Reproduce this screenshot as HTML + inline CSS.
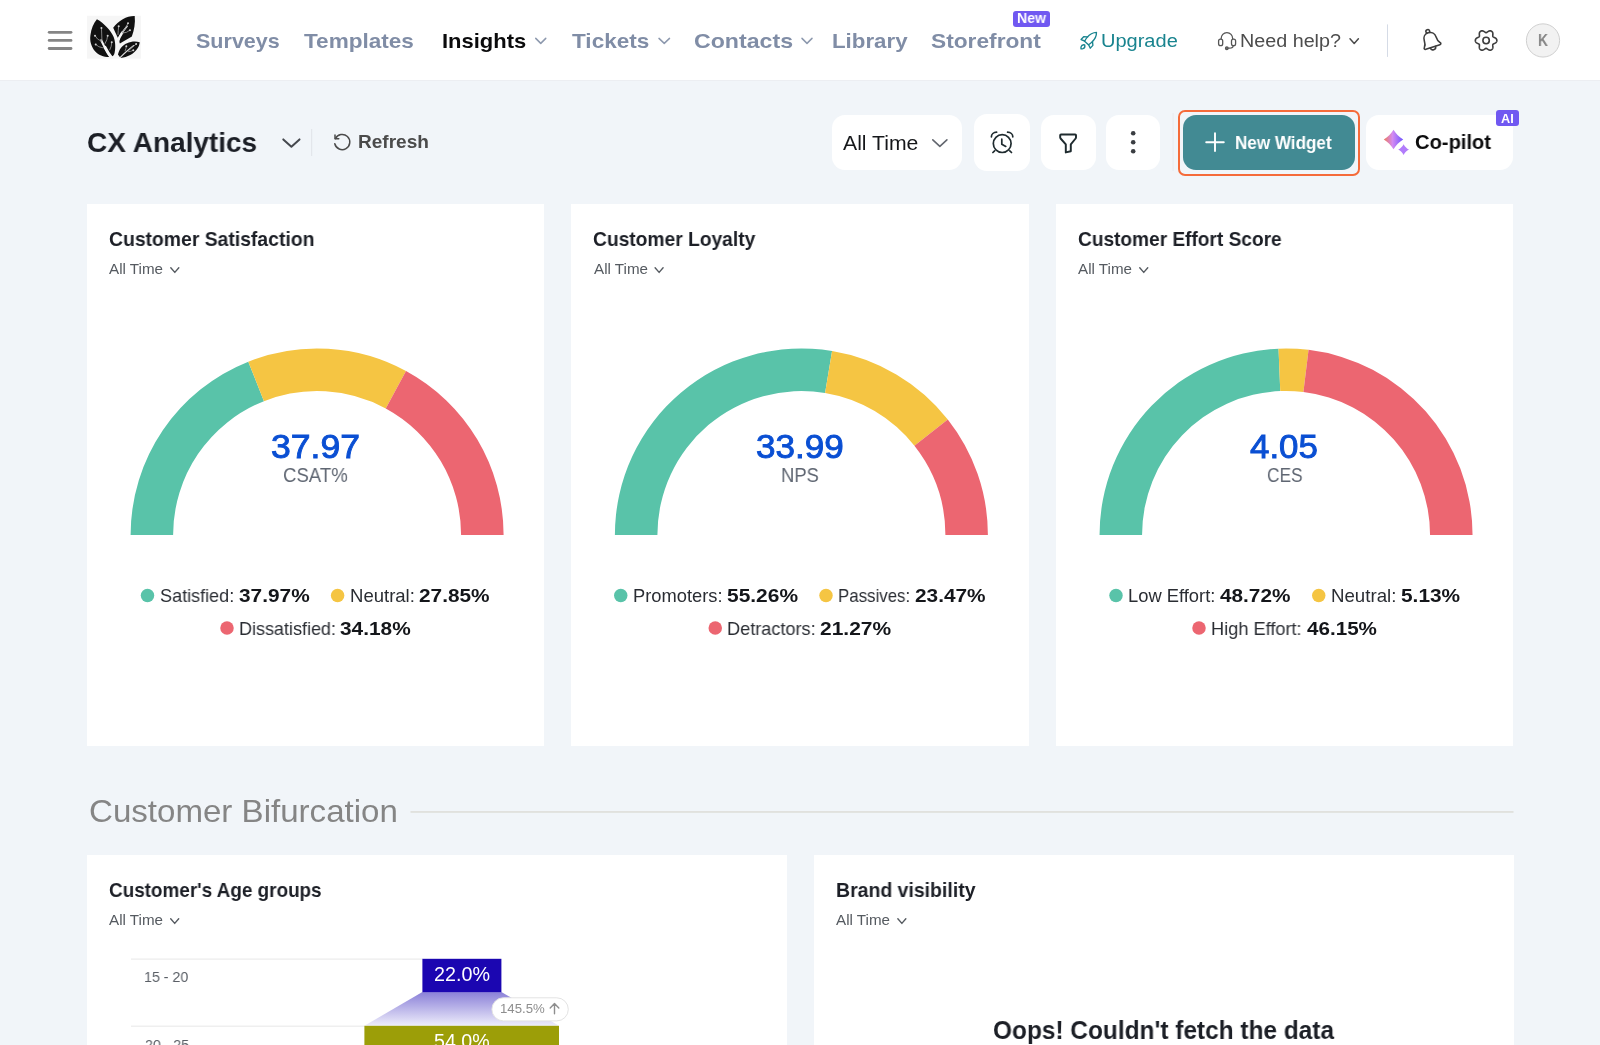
<!DOCTYPE html>
<html><head><meta charset="utf-8"><title>CX Analytics</title>
<style>
html,body{margin:0;padding:0}
body{width:1600px;height:1045px;overflow:hidden;background:#f1f5f9;position:relative;font-family:"Liberation Sans",sans-serif}
.box{position:absolute}
.t{position:absolute;white-space:nowrap;transform-origin:0 0;will-change:transform;font-family:"Liberation Sans",sans-serif}
svg.ov{position:absolute;left:0;top:0;pointer-events:none}
</style></head><body>
<div class="box" style="left:0;top:0;width:1600px;height:80.2px;background:#fff;border-bottom:1px solid #eceef2"></div>
<div class="box" style="left:1012.75px;top:10.6px;width:37.3px;height:16.3px;background:#7058f1;border-radius:3px"></div>
<div class="box" style="left:832px;top:114.8px;width:130px;height:55.39999999999999px;background:#fff;border-radius:13px;"></div>
<div class="box" style="left:973.5px;top:114px;width:56.5px;height:57px;background:#fff;border-radius:13px;"></div>
<div class="box" style="left:1041px;top:115px;width:54.59999999999991px;height:54.599999999999994px;background:#fff;border-radius:13px;"></div>
<div class="box" style="left:1106px;top:115px;width:54.40000000000009px;height:54.599999999999994px;background:#fff;border-radius:13px;"></div>
<div class="box" style="left:1178px;top:109.8px;width:181.5999999999999px;height:66.39999999999999px;background:transparent;border-radius:7px;border:2.4px solid #f56b3a;box-sizing:border-box;"></div>
<div class="box" style="left:1183.3px;top:114.6px;width:171.5px;height:55.400000000000006px;background:#428a93;border-radius:13px;"></div>
<div class="box" style="left:1366px;top:115.2px;width:147.4000000000001px;height:54.60000000000001px;background:#fff;border-radius:13px;"></div>
<div class="box" style="left:1496px;top:110.4px;width:22.59999999999991px;height:15.5px;background:#7058f1;border-radius:3px;"></div>
<div class="box" style="left:86.6px;top:203.6px;width:457.9px;height:542.6999999999999px;background:#fff;border-radius:0px;"></div>
<div class="box" style="left:570.9px;top:203.6px;width:457.9px;height:542.6999999999999px;background:#fff;border-radius:0px;"></div>
<div class="box" style="left:1055.55px;top:203.6px;width:457.89999999999986px;height:542.6999999999999px;background:#fff;border-radius:0px;"></div>
<div class="box" style="left:86.6px;top:854.8px;width:700.6px;height:190.20000000000005px;background:#fff;border-radius:0px;"></div>
<div class="box" style="left:814.0px;top:854.8px;width:699.5px;height:190.20000000000005px;background:#fff;border-radius:0px;"></div>

<svg class="ov" width="1600" height="1045" viewBox="0 0 1600 1045">
<defs>
<linearGradient id="fg" x1="0" y1="0" x2="0" y2="1"><stop offset="0" stop-color="#8a80d8"/><stop offset="1" stop-color="#eeedfb"/></linearGradient>
<linearGradient id="sp" x1="0" y1="0" x2="1" y2="0"><stop offset="0" stop-color="#ec7a5c"/><stop offset="0.45" stop-color="#d48af2"/><stop offset="1" stop-color="#6f55ff"/></linearGradient>
</defs>
<rect x="47.8" y="30.9" width="24.6" height="2.8" rx="1.4" fill="#858585"/>
<rect x="47.8" y="39.0" width="24.6" height="2.8" rx="1.4" fill="#858585"/>
<rect x="47.8" y="47.1" width="24.6" height="2.8" rx="1.4" fill="#858585"/>
<path d="M535.75 38.40L540.75 43.40L545.75 38.40" fill="none" stroke="#8d99ae" stroke-width="1.5" stroke-linecap="round" stroke-linejoin="round"/>
<path d="M659.00 38.40L664.25 43.40L669.50 38.40" fill="none" stroke="#8d99ae" stroke-width="1.5" stroke-linecap="round" stroke-linejoin="round"/>
<path d="M802.00 38.40L807.00 43.40L812.00 38.40" fill="none" stroke="#8d99ae" stroke-width="1.5" stroke-linecap="round" stroke-linejoin="round"/>
<path d="M1350.00 38.80L1354.20 43.40L1358.40 38.80" fill="none" stroke="#4a4a4a" stroke-width="1.5" stroke-linecap="round" stroke-linejoin="round"/>
<rect x="1387" y="24.4" width="1" height="32.5" fill="#d5dbe6"/>
<circle cx="1543" cy="40.45" r="16.6" fill="#f2f2f2" stroke="#d0d0d0" stroke-width="1"/>
<path d="M283.30 139.40L291.40 146.80L299.50 139.40" fill="none" stroke="#45484e" stroke-width="2" stroke-linecap="round" stroke-linejoin="round"/>
<rect x="311.2" y="129" width="1" height="27" fill="#dfe3e8"/>
<path d="M932.80 139.90L939.85 146.30L946.90 139.90" fill="none" stroke="#62666e" stroke-width="1.6" stroke-linecap="round" stroke-linejoin="round"/>
<circle cx="1133.2" cy="133.3" r="2.3" fill="#3a3d42"/>
<circle cx="1133.2" cy="142.3" r="2.3" fill="#3a3d42"/>
<circle cx="1133.2" cy="151.3" r="2.3" fill="#3a3d42"/>
<rect x="1172.6" y="113" width="1" height="58" fill="#e8ebf0"/>
<path d="M1206.2 142.2H1223.8M1215 133.3V151" stroke="#fff" stroke-width="1.9" stroke-linecap="round"/>
<path d="M170.80 267.80L174.80 272.40L178.80 267.80" fill="none" stroke="#555a60" stroke-width="1.4" stroke-linecap="round" stroke-linejoin="round"/>
<path d="M130.60 535.00A186.5 186.5 0 0 1 248.28 361.66L263.96 401.16A144.0 144.0 0 0 0 173.10 535.00Z" fill="#59c3a9"/><path d="M248.28 361.66A186.5 186.5 0 0 1 406.02 371.06L385.76 408.42A144.0 144.0 0 0 0 263.96 401.16Z" fill="#f5c543"/><path d="M406.02 371.06A186.5 186.5 0 0 1 503.60 535.00L461.10 535.00A144.0 144.0 0 0 0 385.76 408.42Z" fill="#ec6671"/>
<circle cx="147.5" cy="595.55" r="6.75" fill="#59c3a9"/>
<circle cx="337.6" cy="595.55" r="6.75" fill="#f5c543"/>
<circle cx="227" cy="628.0" r="6.75" fill="#ec6671"/>
<path d="M655.10 267.80L659.10 272.40L663.10 267.80" fill="none" stroke="#555a60" stroke-width="1.4" stroke-linecap="round" stroke-linejoin="round"/>
<path d="M614.90 535.00A186.5 186.5 0 0 1 832.08 351.04L825.09 392.96A144.0 144.0 0 0 0 657.40 535.00Z" fill="#59c3a9"/><path d="M832.08 351.04A186.5 186.5 0 0 1 947.79 419.45L914.43 445.78A144.0 144.0 0 0 0 825.09 392.96Z" fill="#f5c543"/><path d="M947.79 419.45A186.5 186.5 0 0 1 987.90 535.00L945.40 535.00A144.0 144.0 0 0 0 914.43 445.78Z" fill="#ec6671"/>
<circle cx="620.75" cy="595.55" r="6.75" fill="#59c3a9"/>
<circle cx="826" cy="595.55" r="6.75" fill="#f5c543"/>
<circle cx="715.25" cy="628.0" r="6.75" fill="#ec6671"/>
<path d="M1139.75 267.80L1143.75 272.40L1147.75 267.80" fill="none" stroke="#555a60" stroke-width="1.4" stroke-linecap="round" stroke-linejoin="round"/>
<path d="M1099.55 535.00A186.5 186.5 0 0 1 1278.55 348.65L1280.26 391.12A144.0 144.0 0 0 0 1142.05 535.00Z" fill="#59c3a9"/><path d="M1278.55 348.65A186.5 186.5 0 0 1 1308.55 349.86L1303.42 392.05A144.0 144.0 0 0 0 1280.26 391.12Z" fill="#f5c543"/><path d="M1308.55 349.86A186.5 186.5 0 0 1 1472.55 535.00L1430.05 535.00A144.0 144.0 0 0 0 1303.42 392.05Z" fill="#ec6671"/>
<circle cx="1116" cy="595.55" r="6.75" fill="#59c3a9"/>
<circle cx="1318.75" cy="595.55" r="6.75" fill="#f5c543"/>
<circle cx="1199" cy="628.0" r="6.75" fill="#ec6671"/>
<rect x="410.5" y="811.2" width="1103" height="1.5" fill="#dcddd8"/>
<path d="M170.70 918.80L174.70 923.40L178.70 918.80" fill="none" stroke="#555a60" stroke-width="1.4" stroke-linecap="round" stroke-linejoin="round"/>
<path d="M897.85 918.80L901.85 923.40L905.85 918.80" fill="none" stroke="#555a60" stroke-width="1.4" stroke-linecap="round" stroke-linejoin="round"/>
<rect x="131" y="958.5" width="292" height="1.2" fill="#ececec"/>
<rect x="131" y="1025.6" width="234" height="1.2" fill="#ececec"/>
<polygon points="422.4,992 501.4,992 559,1025.8 364.4,1025.8" fill="url(#fg)"/>
<rect x="422.4" y="958.8" width="79" height="33.3" fill="#1b06b1"/>
<rect x="364.4" y="1025.8" width="194.6" height="20" fill="#9c9e08"/>
<rect x="491.9" y="997.8" width="76.4" height="23.1" rx="11.55" fill="#fff" stroke="#e3e3e3" stroke-width="1"/>
<rect x="87" y="15.8" width="54" height="42.8" fill="#f6f6f6"/>
<path d="M96.92 19.18C104.10 23.00 110.79 30.66 113.67 36.88C115.58 41.67 115.58 48.36 114.62 52.67C114.14 55.06 112.71 56.74 110.08 56.98C104.10 57.22 98.35 55.06 95.00 51.23C91.18 46.45 89.50 40.71 90.46 34.97C91.18 28.75 93.57 23.00 96.92 19.18Z" fill="#111"/>
<path d="M134.72 16.07C127.06 15.83 118.45 20.61 113.19 27.79C114.62 31.14 116.06 34.01 117.49 36.88C118.45 38.79 119.41 41.19 119.89 43.58C123.71 40.71 128.02 38.79 131.85 36.40C134.24 30.18 135.44 23.00 134.72 16.07Z" fill="#111"/>
<path d="M139.74 42.14C132.80 40.23 125.15 42.62 120.84 47.89C119.41 49.80 118.45 52.19 117.97 54.58C118.93 56.02 119.89 57.22 120.84 57.93C127.06 57.45 134.24 54.11 137.59 48.36C138.78 46.45 139.50 44.30 139.74 42.14Z" fill="#111"/>
<path d="M101.22 40.23C104.10 46.45 106.97 52.19 111.27 57.45" fill="none" stroke="#f6f6f6" stroke-width="2.0" stroke-linecap="round"/>
<path d="M105.05 47.41C106.97 51.23 108.88 54.58 111.51 57.69" fill="none" stroke="#f6f6f6" stroke-width="3.0" stroke-linecap="round"/>
<path d="M127.06 26.35C122.28 32.10 118.45 36.88 117.49 42.62C117.01 47.41 116.78 52.19 116.54 57.45" fill="none" stroke="#f6f6f6" stroke-width="1.5" stroke-linecap="round"/>
<path d="M122.28 32.57C119.89 35.92 118.21 39.27 117.49 43.10" fill="none" stroke="#f6f6f6" stroke-width="2.4" stroke-linecap="round"/>
<path d="M133.76 45.49C129.45 48.84 124.67 52.67 120.36 57.45" fill="none" stroke="#dcdcdc" stroke-width="1.1" stroke-linecap="round"/>
<path d="M101.46 28.03Q101.70 33.53 101.94 40.71" fill="none" stroke="#8e8e8e" stroke-width="0.9" stroke-linecap="round"/>
<circle cx="101.46" cy="28.03" r="1.0" fill="#cfcfcf"/>
<path d="M95.00 35.68Q96.92 39.75 101.22 41.19" fill="none" stroke="#8e8e8e" stroke-width="0.9" stroke-linecap="round"/>
<circle cx="95.00" cy="35.68" r="1.0" fill="#cfcfcf"/>
<path d="M107.68 35.68Q107.44 39.75 105.05 43.58" fill="none" stroke="#8e8e8e" stroke-width="0.9" stroke-linecap="round"/>
<circle cx="107.68" cy="35.68" r="1.0" fill="#cfcfcf"/>
<path d="M95.72 44.54Q98.35 47.41 103.14 47.89" fill="none" stroke="#8e8e8e" stroke-width="0.9" stroke-linecap="round"/>
<circle cx="95.72" cy="44.54" r="1.0" fill="#cfcfcf"/>
<path d="M111.75 42.14Q111.75 46.45 109.84 49.80" fill="none" stroke="#8e8e8e" stroke-width="0.9" stroke-linecap="round"/>
<circle cx="111.75" cy="42.14" r="1.0" fill="#cfcfcf"/>
<path d="M118.69 26.35Q118.21 30.18 117.97 34.49" fill="none" stroke="#8e8e8e" stroke-width="0.9" stroke-linecap="round"/>
<circle cx="118.69" cy="26.35" r="1.0" fill="#cfcfcf"/>
<path d="M128.02 23.24Q126.11 27.79 122.28 32.57" fill="none" stroke="#8e8e8e" stroke-width="0.9" stroke-linecap="round"/>
<circle cx="128.02" cy="23.24" r="1.0" fill="#cfcfcf"/>
<path d="M129.93 30.18Q127.06 33.05 122.76 33.05" fill="none" stroke="#8e8e8e" stroke-width="0.9" stroke-linecap="round"/>
<circle cx="129.93" cy="30.18" r="1.0" fill="#cfcfcf"/>
<path d="M126.34 46.21Q126.11 48.84 125.15 50.76" fill="none" stroke="#8e8e8e" stroke-width="0.9" stroke-linecap="round"/>
<circle cx="126.34" cy="46.21" r="1.0" fill="#cfcfcf"/>
<path d="M136.15 44.06Q131.85 47.41 128.02 51.23" fill="none" stroke="#8e8e8e" stroke-width="0.9" stroke-linecap="round"/>
<circle cx="136.15" cy="44.06" r="1.0" fill="#cfcfcf"/>
<path d="M133.28 50.28Q130.89 51.71 128.50 51.71" fill="none" stroke="#8e8e8e" stroke-width="0.9" stroke-linecap="round"/>
<circle cx="133.28" cy="50.28" r="1.0" fill="#cfcfcf"/>
<g transform="translate(1090.6 38.6) rotate(43)" fill="none" stroke="#19848f" stroke-width="1.35" stroke-linecap="round" stroke-linejoin="round"><path d="M0 -8.6C2.6 -6 3.6 -2 3.4 1.5C3.3 3.4 2.9 5 2.6 6H-2.6C-2.9 5 -3.3 3.4 -3.4 1.5C-3.6 -2 -2.6 -6 0 -8.6Z"/><path d="M-3.3 0.8L-6.3 3.4V7.2L-2.7 5.8"/><path d="M3.3 0.8L6.3 3.4V7.2L2.7 5.8"/><path d="M0 8.6C1.5 9.6 2 11.4 1.3 12.6C0.8 13.4 0 14 0 14C0 14 -0.8 13.4 -1.3 12.6C-2 11.4 -1.5 9.6 0 8.6Z"/></g>
<g fill="none" stroke="#555" stroke-width="1.3" stroke-linecap="round" stroke-linejoin="round"><path d="M1221.1 38.9C1221.1 35.3 1223.6 32.6 1226.9 32.6C1230.2 32.6 1232.7 35.3 1232.7 38.9"/><rect x="1218.6" y="39.2" width="4.1" height="6.4" rx="1.9"/><rect x="1231.5" y="39.2" width="4.1" height="6.4" rx="1.9"/><path d="M1233.2 45.8C1233.2 47.4 1231.8 48.2 1229.6 48.2H1228.4"/><circle cx="1226.8" cy="48.2" r="1.3" fill="#777"/></g>
<g transform="translate(1430.7 40.4) rotate(-18)" fill="none" stroke="#3d3d3d" stroke-width="1.6" stroke-linecap="round" stroke-linejoin="round"><circle cx="0" cy="-9.4" r="1.9"/><path d="M0 -8C-3.7 -8 -6.2 -5.3 -6.2 -1.6C-6.2 1.6 -6.6 3.2 -8.2 4.8C-9.2 5.8 -8.6 7 -7.4 7H7.4C8.6 7 9.2 5.8 8.2 4.8C6.6 3.2 6.2 1.6 6.2 -1.6C6.2 -5.3 3.7 -8 0 -8Z" fill="#fff"/><path d="M-2.7 7.2C-2.7 10.6 2.7 10.6 2.7 7.2"/></g>
<path d="M1496.87 40.50L1496.85 40.78L1496.81 41.06L1496.73 41.34L1496.62 41.61L1496.49 41.87L1496.32 42.12L1496.11 42.36L1495.88 42.58L1495.63 42.79L1495.35 42.98L1495.06 43.15L1494.76 43.31L1494.46 43.46L1494.16 43.60L1493.88 43.72L1493.62 43.85L1493.39 43.98L1493.20 44.12L1493.04 44.27L1492.92 44.44L1492.83 44.62L1492.78 44.84L1492.76 45.08L1492.76 45.34L1492.78 45.63L1492.81 45.94L1492.84 46.26L1492.87 46.59L1492.88 46.93L1492.87 47.27L1492.85 47.61L1492.79 47.93L1492.71 48.24L1492.61 48.54L1492.48 48.81L1492.32 49.06L1492.14 49.29L1491.94 49.49L1491.72 49.67L1491.48 49.83L1491.23 49.95L1490.97 50.06L1490.69 50.13L1490.40 50.17L1490.11 50.18L1489.81 50.16L1489.50 50.10L1489.19 50.01L1488.88 49.90L1488.58 49.75L1488.28 49.59L1487.99 49.41L1487.72 49.22L1487.45 49.03L1487.20 48.85L1486.96 48.69L1486.73 48.56L1486.52 48.45L1486.31 48.39L1486.10 48.37L1485.89 48.39L1485.68 48.45L1485.47 48.56L1485.24 48.69L1485.00 48.85L1484.75 49.03L1484.48 49.22L1484.21 49.41L1483.92 49.59L1483.62 49.75L1483.32 49.90L1483.01 50.01L1482.70 50.10L1482.39 50.16L1482.09 50.18L1481.80 50.17L1481.51 50.13L1481.23 50.06L1480.97 49.95L1480.71 49.83L1480.48 49.67L1480.26 49.49L1480.06 49.29L1479.88 49.06L1479.72 48.81L1479.59 48.54L1479.49 48.24L1479.41 47.93L1479.35 47.61L1479.33 47.27L1479.32 46.93L1479.33 46.59L1479.36 46.26L1479.39 45.94L1479.42 45.63L1479.44 45.34L1479.44 45.08L1479.42 44.84L1479.37 44.62L1479.28 44.44L1479.16 44.27L1479.00 44.12L1478.81 43.98L1478.58 43.85L1478.32 43.72L1478.04 43.60L1477.74 43.46L1477.44 43.31L1477.14 43.15L1476.85 42.98L1476.57 42.79L1476.32 42.58L1476.09 42.36L1475.88 42.12L1475.71 41.87L1475.58 41.61L1475.47 41.34L1475.39 41.06L1475.35 40.78L1475.33 40.50L1475.35 40.22L1475.39 39.94L1475.47 39.66L1475.58 39.39L1475.71 39.13L1475.88 38.88L1476.09 38.64L1476.32 38.42L1476.57 38.21L1476.85 38.02L1477.14 37.85L1477.44 37.69L1477.74 37.54L1478.04 37.40L1478.32 37.28L1478.58 37.15L1478.81 37.02L1479.00 36.88L1479.16 36.73L1479.28 36.57L1479.37 36.38L1479.42 36.16L1479.44 35.92L1479.44 35.66L1479.42 35.37L1479.39 35.06L1479.36 34.74L1479.33 34.41L1479.32 34.07L1479.33 33.73L1479.35 33.39L1479.41 33.07L1479.49 32.76L1479.59 32.46L1479.72 32.19L1479.88 31.94L1480.06 31.71L1480.26 31.51L1480.48 31.33L1480.71 31.17L1480.97 31.05L1481.23 30.94L1481.51 30.87L1481.80 30.83L1482.09 30.82L1482.39 30.84L1482.70 30.90L1483.01 30.99L1483.32 31.10L1483.62 31.25L1483.92 31.41L1484.21 31.59L1484.48 31.78L1484.75 31.97L1485.00 32.15L1485.24 32.31L1485.47 32.44L1485.68 32.55L1485.89 32.61L1486.10 32.63L1486.31 32.61L1486.52 32.55L1486.73 32.44L1486.96 32.31L1487.20 32.15L1487.45 31.97L1487.72 31.78L1487.99 31.59L1488.28 31.41L1488.58 31.25L1488.88 31.10L1489.19 30.99L1489.50 30.90L1489.81 30.84L1490.11 30.82L1490.40 30.83L1490.69 30.87L1490.97 30.94L1491.23 31.05L1491.48 31.17L1491.72 31.33L1491.94 31.51L1492.14 31.71L1492.32 31.94L1492.48 32.19L1492.61 32.46L1492.71 32.76L1492.79 33.07L1492.85 33.39L1492.87 33.73L1492.88 34.07L1492.87 34.41L1492.84 34.74L1492.81 35.06L1492.78 35.37L1492.76 35.66L1492.76 35.92L1492.78 36.16L1492.83 36.38L1492.92 36.57L1493.04 36.73L1493.20 36.88L1493.39 37.02L1493.62 37.15L1493.88 37.28L1494.16 37.40L1494.46 37.54L1494.76 37.69L1495.06 37.85L1495.35 38.02L1495.63 38.21L1495.88 38.42L1496.11 38.64L1496.32 38.88L1496.49 39.13L1496.62 39.39L1496.73 39.66L1496.81 39.94L1496.85 40.22Z" fill="none" stroke="#3d3d3d" stroke-width="1.6" stroke-linejoin="round"/>
<circle cx="1486.1" cy="40.5" r="3.2" fill="none" stroke="#3d3d3d" stroke-width="1.6"/>
<g fill="none" stroke="#4b4b4b" stroke-width="1.5" stroke-linecap="round" stroke-linejoin="round"><path d="M335.4 138.6A7.6 7.6 0 1 1 334.8 143.8"/><path d="M335 134.9V138.7H338.8"/></g>
<g fill="none" stroke="#1f2b2f" stroke-width="1.7" stroke-linecap="round" stroke-linejoin="round"><circle cx="1002.2" cy="143.6" r="8.9"/><path d="M1001.8 139.2V144.2L1005.8 146.4"/><path d="M991.4 136.8C991.4 134.2 993.6 132.2 996.6 132.2"/><path d="M1007.6 132.2C1010.6 132.2 1012.8 134.2 1012.8 136.8"/><path d="M994.6 150.8L992.9 152.5"/><path d="M1009.8 150.8L1011.5 152.5"/></g>
<path d="M1061 134.4H1075.2C1075.8 134.4 1076 134.8 1076 135.2V137.6C1076 138 1075.9 138.2 1075.6 138.5L1070.8 144.4V151.2L1065.8 152.4V144.4L1060.6 138.5C1060.3 138.2 1060.2 138 1060.2 137.6V135.2C1060.2 134.8 1060.4 134.4 1061 134.4Z" fill="none" stroke="#1f2b2f" stroke-width="1.95" stroke-linejoin="round"/>
<path d="M1393.5 129.8C1395.71 133.60 1399.40 137.29 1403.2 139.5C1399.40 141.71 1395.71 145.40 1393.5 149.2C1391.29 145.40 1387.60 141.71 1383.8 139.5C1387.60 137.29 1391.29 133.60 1393.5 129.8Z" fill="url(#sp)"/>
<path d="M1403.6 144.2C1404.77 146.49 1406.71 148.43 1409.0 149.6C1406.71 150.77 1404.77 152.71 1403.6 155.0C1402.43 152.71 1400.49 150.77 1398.1999999999998 149.6C1400.49 148.43 1402.43 146.49 1403.6 144.2Z" fill="#b27cfb" stroke="#fff" stroke-width="1.6" paint-order="stroke"/>
<path d="M554.5 1013.8V1003.8M550.2 1008L554.5 1003.6L558.8 1008" fill="none" stroke="#8e8e8e" stroke-width="1.4" stroke-linecap="round" stroke-linejoin="round"/>
</svg>
<div class="t" style="left:196.35px;top:28.90px;font-size:21.08px;line-height:23px;font-weight:bold;color:#808da6;transform:scaleX(1.0216);">Surveys</div>
<div class="t" style="left:303.67px;top:28.90px;font-size:21.08px;line-height:23px;font-weight:bold;color:#808da6;transform:scaleX(1.0700);">Templates</div>
<div class="t" style="left:442.17px;top:28.90px;font-size:21.08px;line-height:23px;font-weight:bold;color:#0b0b0c;transform:scaleX(1.0419);">Insights</div>
<div class="t" style="left:572.07px;top:28.90px;font-size:21.08px;line-height:23px;font-weight:bold;color:#808da6;transform:scaleX(1.0699);">Tickets</div>
<div class="t" style="left:693.97px;top:28.90px;font-size:21.08px;line-height:23px;font-weight:bold;color:#808da6;transform:scaleX(1.0982);">Contacts</div>
<div class="t" style="left:831.55px;top:28.90px;font-size:21.08px;line-height:23px;font-weight:bold;color:#808da6;transform:scaleX(1.0576);">Library</div>
<div class="t" style="left:930.82px;top:28.90px;font-size:21.08px;line-height:23px;font-weight:bold;color:#808da6;transform:scaleX(1.0777);">Storefront</div>
<div class="t" style="left:1016.99px;top:9.75px;font-size:14.39px;line-height:16px;font-weight:bold;color:#fff;transform:scaleX(0.9754);">New</div>
<div class="t" style="left:1101.45px;top:29.60px;font-size:18.90px;line-height:21px;font-weight:normal;color:#19848f;transform:scaleX(1.0592);">Upgrade</div>
<div class="t" style="left:1239.72px;top:29.80px;font-size:18.90px;line-height:21px;font-weight:normal;color:#4d4d4d;transform:scaleX(1.0447);">Need help?</div>
<div class="t" style="left:1537.90px;top:30.80px;font-size:16.13px;line-height:18px;font-weight:bold;color:#858585;transform:scaleX(0.8552);">K</div>
<div class="t" style="left:87.13px;top:126.30px;font-size:28.34px;line-height:32px;font-weight:bold;color:#1c1f26;transform:scaleX(0.9887);">CX Analytics</div>
<div class="t" style="left:358.16px;top:131.90px;font-size:18.17px;line-height:20px;font-weight:bold;color:#4b4b4b;transform:scaleX(1.0488);">Refresh</div>
<div class="t" style="left:843.10px;top:131.65px;font-size:19.48px;line-height:22px;font-weight:normal;color:#15171a;transform:scaleX(1.0883);">All Time</div>
<div class="t" style="left:1235.39px;top:132.50px;font-size:18.17px;line-height:20px;font-weight:bold;color:#fff;transform:scaleX(0.9400);">New Widget</div>
<div class="t" style="left:1415.19px;top:131.00px;font-size:20.35px;line-height:22px;font-weight:bold;color:#0c0c0d;transform:scaleX(0.9894);">Co-pilot</div>
<div class="t" style="left:1500.68px;top:112.00px;font-size:12.35px;line-height:14px;font-weight:bold;color:#fff;transform:scaleX(1.0285);">AI</div>
<div class="t" style="left:108.63px;top:228.25px;font-size:19.62px;line-height:22px;font-weight:bold;color:#1c1f26;transform:scaleX(0.9868);">Customer Satisfaction</div>
<div class="t" style="left:109.20px;top:261.30px;font-size:14.61px;line-height:16px;font-weight:normal;color:#555a60;transform:scaleX(1.0395);">All Time</div>
<div class="t" style="left:270.93px;top:428.00px;font-size:33.43px;line-height:37px;font-weight:normal;color:#0a4fd3;transform:scaleX(1.0637);-webkit-text-stroke:0.9px #0a4fd3;">37.97</div>
<div class="t" style="left:282.77px;top:463.90px;font-size:20.06px;line-height:22px;font-weight:normal;color:#5f6672;transform:scaleX(0.9282);">CSAT%</div>
<div class="t" style="left:159.94px;top:585.10px;font-size:18.31px;line-height:21px;font-weight:normal;color:#2a2d33;transform:scaleX(0.9856);">Satisfied:</div>
<div class="t" style="left:238.98px;top:585.10px;font-size:18.31px;line-height:21px;font-weight:bold;color:#14161a;transform:scaleX(1.1386);">37.97%</div>
<div class="t" style="left:349.77px;top:585.10px;font-size:18.31px;line-height:21px;font-weight:normal;color:#2a2d33;transform:scaleX(1.0125);">Neutral:</div>
<div class="t" style="left:419.27px;top:585.10px;font-size:18.31px;line-height:21px;font-weight:bold;color:#14161a;transform:scaleX(1.1379);">27.85%</div>
<div class="t" style="left:238.81px;top:617.90px;font-size:18.31px;line-height:21px;font-weight:normal;color:#2a2d33;transform:scaleX(0.9833);">Dissatisfied:</div>
<div class="t" style="left:340.23px;top:617.90px;font-size:18.31px;line-height:21px;font-weight:bold;color:#14161a;transform:scaleX(1.1386);">34.18%</div>
<div class="t" style="left:592.93px;top:228.25px;font-size:19.62px;line-height:22px;font-weight:bold;color:#1c1f26;transform:scaleX(0.9798);">Customer Loyalty</div>
<div class="t" style="left:593.50px;top:261.30px;font-size:14.61px;line-height:16px;font-weight:normal;color:#555a60;transform:scaleX(1.0395);">All Time</div>
<div class="t" style="left:755.95px;top:428.00px;font-size:33.43px;line-height:37px;font-weight:normal;color:#0a4fd3;transform:scaleX(1.0491);-webkit-text-stroke:0.9px #0a4fd3;">33.99</div>
<div class="t" style="left:781.02px;top:463.90px;font-size:20.06px;line-height:22px;font-weight:normal;color:#5f6672;transform:scaleX(0.9196);">NPS</div>
<div class="t" style="left:632.78px;top:585.10px;font-size:18.31px;line-height:21px;font-weight:normal;color:#2a2d33;transform:scaleX(1.0007);">Promoters:</div>
<div class="t" style="left:726.87px;top:585.10px;font-size:18.31px;line-height:21px;font-weight:bold;color:#14161a;transform:scaleX(1.1444);">55.26%</div>
<div class="t" style="left:838.15px;top:585.10px;font-size:18.31px;line-height:21px;font-weight:normal;color:#2a2d33;transform:scaleX(0.9211);">Passives:</div>
<div class="t" style="left:914.77px;top:585.10px;font-size:18.31px;line-height:21px;font-weight:bold;color:#14161a;transform:scaleX(1.1379);">23.47%</div>
<div class="t" style="left:727.30px;top:617.90px;font-size:18.31px;line-height:21px;font-weight:normal;color:#2a2d33;transform:scaleX(0.9901);">Detractors:</div>
<div class="t" style="left:820.02px;top:617.90px;font-size:18.31px;line-height:21px;font-weight:bold;color:#14161a;transform:scaleX(1.1461);">21.27%</div>
<div class="t" style="left:1077.59px;top:228.25px;font-size:19.62px;line-height:22px;font-weight:bold;color:#1c1f26;transform:scaleX(0.9733);">Customer Effort Score</div>
<div class="t" style="left:1078.15px;top:261.30px;font-size:14.61px;line-height:16px;font-weight:normal;color:#555a60;transform:scaleX(1.0395);">All Time</div>
<div class="t" style="left:1250.35px;top:428.00px;font-size:33.43px;line-height:37px;font-weight:normal;color:#0a4fd3;transform:scaleX(1.0434);-webkit-text-stroke:0.9px #0a4fd3;">4.05</div>
<div class="t" style="left:1266.63px;top:463.90px;font-size:20.06px;line-height:22px;font-weight:normal;color:#5f6672;transform:scaleX(0.8648);">CES</div>
<div class="t" style="left:1128.03px;top:585.10px;font-size:18.31px;line-height:21px;font-weight:normal;color:#2a2d33;transform:scaleX(1.0022);">Low Effort:</div>
<div class="t" style="left:1219.94px;top:585.10px;font-size:18.31px;line-height:21px;font-weight:bold;color:#14161a;transform:scaleX(1.1352);">48.72%</div>
<div class="t" style="left:1330.50px;top:585.10px;font-size:18.31px;line-height:21px;font-weight:normal;color:#2a2d33;transform:scaleX(1.0207);">Neutral:</div>
<div class="t" style="left:1400.62px;top:585.10px;font-size:18.31px;line-height:21px;font-weight:bold;color:#14161a;transform:scaleX(1.1392);">5.13%</div>
<div class="t" style="left:1211.04px;top:617.90px;font-size:18.31px;line-height:21px;font-weight:normal;color:#2a2d33;transform:scaleX(0.9933);">High Effort:</div>
<div class="t" style="left:1306.69px;top:617.90px;font-size:18.31px;line-height:21px;font-weight:bold;color:#14161a;transform:scaleX(1.1270);">46.15%</div>
<div class="t" style="left:88.85px;top:794.00px;font-size:31.25px;line-height:35px;font-weight:normal;color:#858585;transform:scaleX(1.0586);">Customer Bifurcation</div>
<div class="t" style="left:108.54px;top:879.25px;font-size:19.62px;line-height:22px;font-weight:bold;color:#1c1f26;transform:scaleX(0.9631);">Customer's Age groups</div>
<div class="t" style="left:109.10px;top:912.30px;font-size:14.61px;line-height:16px;font-weight:normal;color:#555a60;transform:scaleX(1.0395);">All Time</div>
<div class="t" style="left:835.98px;top:879.25px;font-size:19.62px;line-height:22px;font-weight:bold;color:#1c1f26;transform:scaleX(0.9923);">Brand visibility</div>
<div class="t" style="left:836.25px;top:912.30px;font-size:14.61px;line-height:16px;font-weight:normal;color:#555a60;transform:scaleX(1.0395);">All Time</div>
<div class="t" style="left:993.22px;top:1015.80px;font-size:25.15px;line-height:28px;font-weight:bold;color:#1c1f26;transform:scaleX(0.9718);">Oops! Couldn't fetch the data</div>
<div class="t" style="left:433.71px;top:962.80px;font-size:19.62px;line-height:22px;font-weight:normal;color:#fff;transform:scaleX(1.0063);">22.0%</div>
<div class="t" style="left:433.91px;top:1030.40px;font-size:19.62px;line-height:22px;font-weight:normal;color:#fff;transform:scaleX(1.0026);">54.0%</div>
<div class="t" style="left:144.38px;top:968.30px;font-size:15.55px;line-height:17px;font-weight:normal;color:#5a5f66;transform:scaleX(0.9162);">15 - 20</div>
<div class="t" style="left:144.74px;top:1035.60px;font-size:15.55px;line-height:17px;font-weight:normal;color:#5a5f66;transform:scaleX(0.9102);">20 - 25</div>
<div class="t" style="left:499.51px;top:1000.90px;font-size:12.79px;line-height:15px;font-weight:normal;color:#8e8e8e;transform:scaleX(1.0329);">145.5%</div>

</body></html>
